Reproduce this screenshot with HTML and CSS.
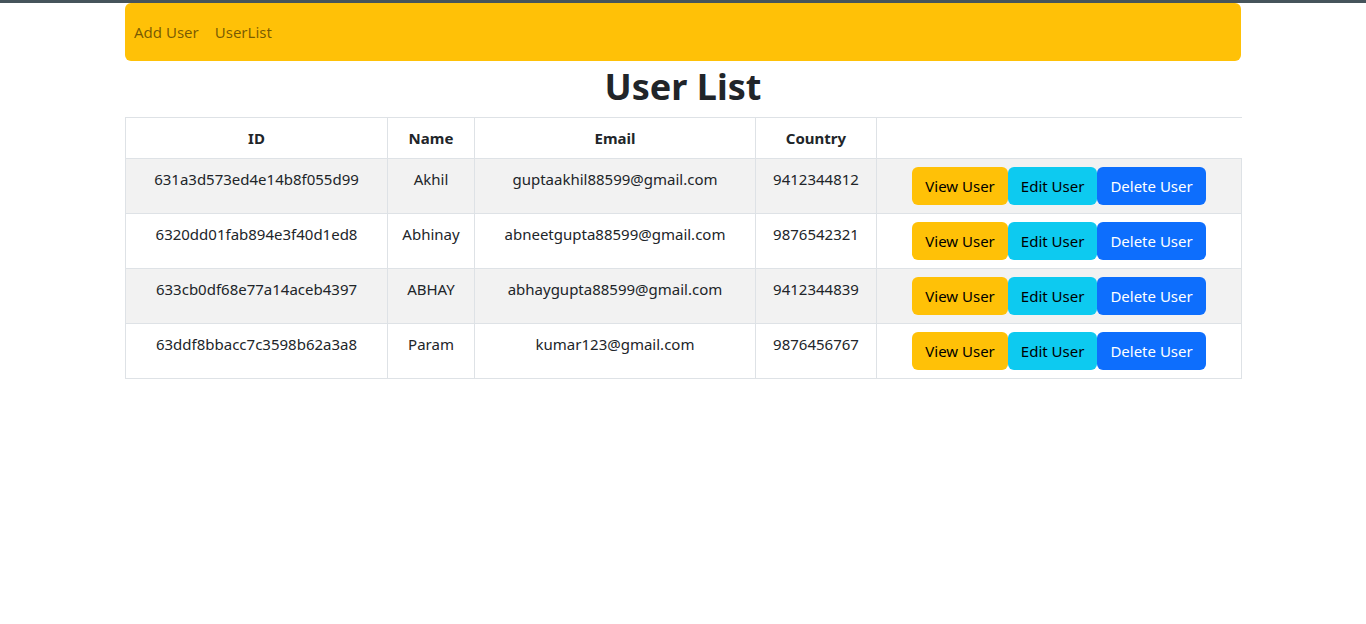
FILE: index.html
```html
<!DOCTYPE html>
<html lang="en">
<head>
<meta charset="utf-8">
<title>User List</title>
<link rel="stylesheet" href="styles.css">
</head>
<body>
<div class="topline"></div>
<div class="container">
  <nav class="navbar">
    <a class="nav-link" href="#">Add User</a>
    <a class="nav-link" href="#">UserList</a>
  </nav>
  <h1 class="title">User List</h1>
  <table class="table">
    <colgroup>
      <col class="c-id"><col class="c-name"><col class="c-email"><col class="c-country"><col class="c-actions">
    </colgroup>
    <thead>
      <tr><th>ID</th><th>Name</th><th>Email</th><th>Country</th><th class="th-last"></th></tr>
    </thead>
    <tbody>
      <tr class="odd">
        <td>631a3d573ed4e14b8f055d99</td><td>Akhil</td><td>guptaakhil88599@gmail.com</td><td>9412344812</td>
        <td class="actions"><div class="btns"><button class="btn btn-warning">View User</button><button class="btn btn-info">Edit User</button><button class="btn btn-primary">Delete User</button></div></td>
      </tr>
      <tr>
        <td>6320dd01fab894e3f40d1ed8</td><td>Abhinay</td><td>abneetgupta88599@gmail.com</td><td>9876542321</td>
        <td class="actions"><div class="btns"><button class="btn btn-warning">View User</button><button class="btn btn-info">Edit User</button><button class="btn btn-primary">Delete User</button></div></td>
      </tr>
      <tr class="odd">
        <td>633cb0df68e77a14aceb4397</td><td>ABHAY</td><td>abhaygupta88599@gmail.com</td><td>9412344839</td>
        <td class="actions"><div class="btns"><button class="btn btn-warning">View User</button><button class="btn btn-info">Edit User</button><button class="btn btn-primary">Delete User</button></div></td>
      </tr>
      <tr>
        <td>63ddf8bbacc7c3598b62a3a8</td><td>Param</td><td>kumar123@gmail.com</td><td>9876456767</td>
        <td class="actions"><div class="btns"><button class="btn btn-warning">View User</button><button class="btn btn-info">Edit User</button><button class="btn btn-primary">Delete User</button></div></td>
      </tr>
    </tbody>
  </table>
</div>
</body>
</html>
```
FILE: styles.css
```css
* { box-sizing: border-box; }
html, body { margin: 0; padding: 0; }
body {
  font-family: "Noto Sans", "Open Sans", sans-serif;
  font-size: 15px;
  line-height: 24px;
  color: #212529;
  background: #fff;
}
.topline { height: 3px; background: #46545b; }
.container {
  width: 1140px;
  margin: 0 auto;
  padding: 0 12px;
}
.navbar {
  background: #ffc107;
  border-radius: 6px;
  height: 58px;
  display: flex;
  align-items: center;
  padding: 0 1px;
}
.nav-link {
  color: rgba(0,0,0,0.55);
  text-decoration: none;
  padding: 8px 8px;
}
.title {
  margin: 0 0 8px;
  font-size: 36px;
  line-height: 48px;
  font-weight: 700;
  text-align: center;
  padding-top: 2px;
  height: 48px;
}
.table {
  width: 100%;
  border-collapse: collapse;
  table-layout: fixed;
}
.c-id { width: 262px; }
.c-name { width: 87px; }
.c-email { width: 281px; }
.c-country { width: 121px; }
.c-actions { width: 365px; }
.table th, .table td {
  border: 1px solid #dee2e6;
  padding: 8px;
  text-align: center;
  vertical-align: top;
}
.table th { font-weight: 700; height: 41px; }
.table th.th-last { border-right: none; }
.table tr.odd td { background: #f2f2f2; }
.table td { height: 55px; }
.btns { display: flex; justify-content: center; }
.btn {
  font-family: inherit;
  font-size: 15px;
  line-height: 24px;
  padding: 6px 12px;
  border: 1px solid transparent;
  border-radius: 6px;
  margin: 0;
  cursor: pointer;
}
.btn-warning { background: #ffc107; color: #000; }
.btn-info { background: #0dcaf0; color: #000; }
.btn-primary { background: #0d6efd; color: #fff; }
```
